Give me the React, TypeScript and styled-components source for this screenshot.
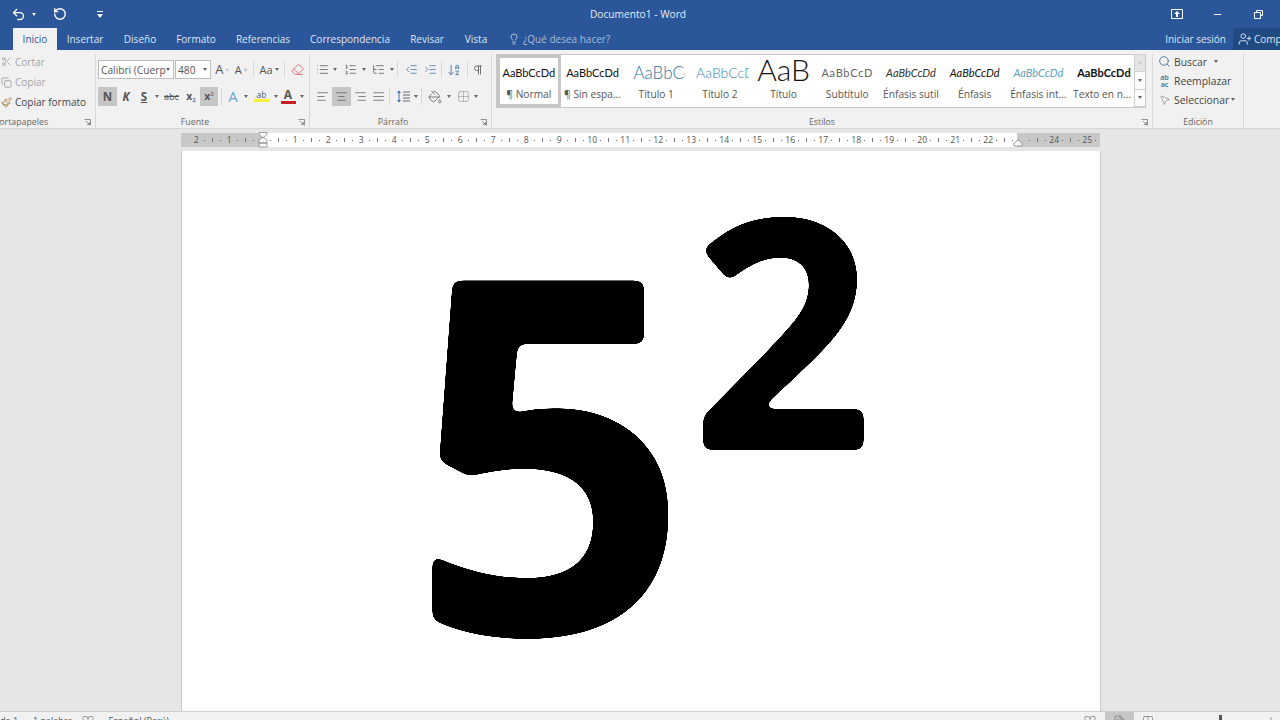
import React from "react";
import styled, { createGlobalStyle } from "styled-components";
import {
  Scissors, Copy, Paintbrush, Lightbulb, Search, MousePointer2, Pilcrow, List, ListOrdered, ListTree,
  AlignLeft, AlignCenter, AlignRight, AlignJustify, IndentDecrease, IndentIncrease, Grid2x2, PaintBucket,
  Undo2, RotateCcw, Minus, UserPlus, ArrowDownAZ, Eraser, BookOpen, Columns2, FileText, Plus,
} from "lucide-react";

const BLUE = "#2b579a";
const UI = `"Open Sans", "Liberation Sans", sans-serif`;

const Global = createGlobalStyle`
  html, body { margin: 0; padding: 0; background: #e6e6e6; overflow: hidden; }
  #root { width: 1280px; height: 720px; }
`;

const Window = styled.div`
  width: 1280px; height: 720px; display: flex; flex-direction: column; overflow: hidden;
  font-family: ${UI}; font-size: 10.5px; color: #444;
`;
const TitleBar = styled.div`
  height: 28px; flex: none; background: ${BLUE}; display: flex; align-items: center; color: #f2f5fa;
`;
const QuickAccess = styled.div`display: flex; align-items: center; width: 525px; padding-left: 11px; box-sizing: border-box;`;
const QuickIcon = styled.span<{ $w: number }>`display: flex; align-items: center; width: ${(p) => p.$w}px; color: #fff;`;
const CaretDown = styled.span<{ $c?: string }>`
  display: inline-block; flex: none; width: 0; height: 0;
  border-left: 2.5px solid transparent; border-right: 2.5px solid transparent;
  border-top: 3px solid ${(p) => p.$c || "#666"};
`;
const Title = styled.div`flex: none; width: 226px; text-align: center; font-size: 10.2px; color: #e6ebf4;`;
const WinControls = styled.div`margin-left: auto; display: flex; align-items: center; padding-right: 1px;`;
const WinBtn = styled.span<{ $w: number }>`display: flex; justify-content: center; width: ${(p) => p.$w}px; color: #fff;`;

const TabBar = styled.div`height: 22px; flex: none; background: ${BLUE}; display: flex; align-items: stretch; padding-left: 13px;`;
const Tab = styled.div<{ $active?: boolean; $w: number }>`
  width: ${(p) => p.$w}px; flex: none; display: flex; align-items: center; justify-content: center; font-size: 10px;
  color: ${(p) => (p.$active ? BLUE : "#dfe6f2")}; background: ${(p) => (p.$active ? "#f1f1f1" : "transparent")};
`;
const TellMe = styled.div`display: flex; align-items: center; gap: 3px; margin-left: 11px; color: #a8bcd9; font-size: 10px;`;
const Account = styled.div`margin-left: auto; display: flex; align-items: stretch;`;
const SignIn = styled.div`display: flex; align-items: center; color: #dfe6f2; font-size: 10px; margin-right: 7px;`;
const Share = styled.div`
  width: 47px; display: flex; align-items: center; gap: 2px; padding-left: 5px; box-sizing: border-box;
  background: #1f4a82; color: #dfe6f2; font-size: 10px; overflow: hidden; white-space: nowrap;
  svg { flex: none; }
`;

const Ribbon = styled.div`
  height: 79px; flex: none; background: #f1f1f1; border-bottom: 1px solid #d6d6d6; box-sizing: border-box; display: flex;
`;
const Group = styled.div<{ $w: number }>`
  width: ${(p) => p.$w}px; flex: none; box-sizing: border-box; position: relative; display: flex; flex-direction: column;
  margin-top: 4px; border-right: 1px solid #d8d8d8;
`;
const Body = styled.div`flex: 1; min-height: 0; display: flex; flex-direction: column;`;
const Footer = styled.div<{ $shift?: number }>`
  height: 14px; flex: none; text-align: center; font-size: 8.8px; line-height: 17px; color: #666; white-space: nowrap;
  padding-right: ${(p) => p.$shift || 0}px;
`;
const ClipFooter = styled(Footer)`text-align: left; margin-left: -6px;`;
const Launcher = styled.svg`position: absolute; right: 4px; bottom: 2px; width: 7px; height: 7px;`;

const ClipList = styled.div`display: flex; flex-direction: column; margin-top: -2px;`;
const ClipRow = styled.div<{ $on?: boolean; $h: number }>`
  height: ${(p) => p.$h}px; display: flex; align-items: center; gap: 3px; font-size: 10px; white-space: nowrap;
  color: ${(p) => (p.$on ? "#444" : "#a5a5a5")};
`;
const ClipIcon = styled.span`width: 12px; display: flex; justify-content: center; flex: none;`;

const Row = styled.div<{ $pad: number; $top: number }>`
  display: flex; align-items: center; height: 19px; padding-left: ${(p) => p.$pad}px; margin-top: ${(p) => p.$top}px;
`;
const Combo = styled.div<{ $w: number }>`
  width: ${(p) => p.$w}px; height: 19px; flex: none; box-sizing: border-box; background: #fff; border: 1px solid #bdbdbd;
  margin-right: 1px; display: flex; align-items: center; justify-content: space-between; padding: 0 3px 0 2px;
  font-size: 10.2px; color: #555; overflow: hidden; white-space: nowrap;
`;
const Btn = styled.div<{ $w: number; $on?: boolean; $c?: string }>`
  width: ${(p) => p.$w}px; height: 19px; flex: none; display: flex; align-items: center; justify-content: center; gap: 2px;
  background: ${(p) => (p.$on ? "#c6c6c6" : "transparent")}; color: ${(p) => p.$c || "#555"};
`;
const Sep = styled.div<{ $m?: number }>`width: 1px; height: 17px; flex: none; background: #d8d8d8; margin: 0 ${(p) => p.$m ?? 5}px;`;
const Letter = styled.span<{ $s?: number; $i?: boolean; $b?: boolean; $u?: boolean; $st?: boolean; $c?: string }>`
  font-size: ${(p) => p.$s || 11}px; line-height: 1; font-weight: ${(p) => (p.$b ? 700 : 400)};
  font-style: ${(p) => (p.$i ? "italic" : "normal")}; color: ${(p) => p.$c || "#555"};
  text-decoration: ${(p) => (p.$u ? "underline" : p.$st ? "line-through" : "none")};
`;
const Mini = styled.sup<{ $sub?: boolean; $c?: string }>`
  font-size: 6px; line-height: 0; vertical-align: ${(p) => (p.$sub ? "-2px" : "4px")}; color: ${(p) => p.$c || "#7a7a7a"};
`;
const Colored = styled.span<{ $bar: string }>`
  display: flex; flex-direction: column; align-items: center; line-height: 1; width: 15px; border-bottom: 3px solid ${(p) => p.$bar};
`;

const Gallery = styled.div`
  display: flex; height: 54px; margin-left: 4px; width: 650px; flex: none; box-sizing: border-box;
  background: #fff; border: 1px solid #c8c8c8;
`;
const StyleItem = styled.div<{ $sel?: boolean }>`
  width: 63.7px; flex: none; box-sizing: border-box; display: flex; flex-direction: column; align-items: center; overflow: hidden;
  border: 3px solid ${(p) => (p.$sel ? "#c6c6c6" : "transparent")};
`;
const Sample = styled.div<{ $c?: string; $s?: number; $i?: boolean; $b?: boolean; $light?: boolean; $start?: number; $track?: number; $up?: number }>`
  height: 29px; width: 100%; flex: none; display: flex; align-items: center; overflow: hidden; white-space: nowrap;
  justify-content: ${(p) => (p.$start !== undefined ? "flex-start" : "center")};
  padding-left: ${(p) => p.$start || 0}px; padding-bottom: ${(p) => p.$up || 0}px; box-sizing: border-box;
  color: ${(p) => p.$c || "#111"}; font-size: ${(p) => p.$s || 11}px; font-family: "Lato", sans-serif;
  font-style: ${(p) => (p.$i ? "italic" : "normal")}; font-weight: ${(p) => (p.$b ? 700 : p.$light ? 300 : 400)};
  letter-spacing: ${(p) => p.$track || 0}px;
`;
const StyleName = styled.div`font-size: 10.2px; color: #555; white-space: nowrap; line-height: 13px; margin-top: 1px;`;
const Scroller = styled.div`width: 12px; margin-left: auto; display: flex; flex-direction: column; background: #f1f1f1;`;
const ScrollBtn = styled.div<{ $dis?: boolean }>`
  flex: 1; display: flex; align-items: center; justify-content: center; border: 1px solid #d0d0d0; border-right: 0; margin-top: -1px;
  background: ${(p) => (p.$dis ? "#e4e4e4" : "#fbfbfb")};
`;

const EditList = styled.div`display: flex; flex-direction: column; padding-left: 4px; margin-top: -2px;`;
const EditRow = styled.div`height: 19px; display: flex; align-items: center; gap: 2px; font-size: 10.4px; color: #444; white-space: nowrap;`;
const EditIcon = styled.span`width: 15px; flex: none; display: flex; justify-content: center; color: #555;`;
const AbAc = styled.span`font-size: 7.2px; line-height: 7px; color: #3a6ea5; text-align: center; font-weight: 600;`;

const Canvas = styled.div`flex: 1; min-height: 0; background: #e6e6e6; display: flex; flex-direction: column; overflow: hidden;`;
const RulerZone = styled.div`height: 22px; flex: none; padding: 4px 0 0 181px; box-sizing: border-box;`;
const Ruler = styled.div`
  position: relative; width: 919px; height: 14px; display: flex; overflow: hidden; padding-left: 11px; box-sizing: border-box;
  background: linear-gradient(90deg, #c8c8c8 81px, #fff 81px, #fff 836px, #c8c8c8 836px);
`;
const Cm = styled.div`width: 33px; flex: none; display: grid; grid-template-columns: repeat(4, 8.25px); align-items: center; height: 14px;`;
const CmNum = styled.span`justify-self: center; font-size: 8.6px; color: #555; white-space: nowrap;`;
const Dot = styled.span`justify-self: center; width: 1px; height: 1px; background: #666;`;
const Tall = styled.span`justify-self: center; width: 1px; height: 4px; background: #777;`;
const Marker = styled.svg<{ $x: number; $top: number }>`
  position: absolute; left: ${(p) => p.$x}px; top: ${(p) => p.$top}px; width: 10px; height: 18px; overflow: visible;
`;
const MarkerWrap = styled.div`position: relative; width: 0; height: 0;`;
const Sheet = styled.div`
  flex: 1; min-height: 0; width: 920px; margin-left: 181px; box-sizing: border-box; background: #fff;
  border: 1px solid #c8c8c8; border-width: 0 1px; overflow: hidden;
`;
const Ink = styled.div`
  height: 100%; background: #fff; display: flex; align-items: flex-start; padding-left: 226px;
  filter: blur(5px) contrast(40); font-family: "Noto Sans", sans-serif; font-weight: 700; color: #000;
`;
const Digit = styled.span<{ $size: number; $top: number; $left: number }>`
  font-size: ${(p) => p.$size}px; line-height: 1; margin-top: ${(p) => p.$top}px; margin-left: ${(p) => p.$left}px;
`;

const Status = styled.div`
  height: 8px; flex: none; background: #f1f1f1; border-top: 1px solid #d0d0d0; display: flex; overflow: hidden; font-size: 9px; color: #555;
`;
const StatusText = styled.span<{ $ml: number }>`margin-left: ${(p) => p.$ml}px; margin-top: 2px; line-height: 13px; white-space: nowrap;`;
const StatusIcon = styled.span<{ $ml: number; $on?: boolean }>`
  margin-left: ${(p) => p.$ml}px; width: 29px; flex: none; display: flex; justify-content: center; padding-top: 3px; height: 20px;
  background: ${(p) => (p.$on ? "#c6c6c6" : "transparent")}; color: #666;
`;
const Thumb = styled.span<{ $ml: number }>`margin-left: ${(p) => p.$ml}px; margin-top: 3px; width: 3px; height: 10px; background: #555; flex: none;`;

const launcher = (
  <Launcher viewBox="0 0 7 7">
    <path d="M0.5 0.5h6v6M2 2l3.5 3.5M3 5.5h2.5V3" fill="none" stroke="#777" strokeWidth="0.8" />
  </Launcher>
);

const cms = [2, 1, 0, 1, 2, 3, 4, 5, 6, 7, 8, 9, 10, 11, 12, 13, 14, 15, 16, 17, 18, 19, 20, 21, 22, 23, 24, 25];

const styles = [
  { name: "¶ Normal", sel: true, text: "AaBbCcDd" },
  { name: "¶ Sin espa...", text: "AaBbCcDd" },
  { name: "Título 1", c: "#2f75a5", s: 17, text: "AaBbCcDd", light: true, start: 6 },
  { name: "Título 2", c: "#3b85b5", s: 14, text: "AaBbCcDd", light: true, start: 5 },
  { name: "Título", s: 30, text: "AaB", light: true, up: 8 },
  { name: "Subtítulo", c: "#666", text: "AaBbCcD", track: 0.7 },
  { name: "Énfasis sutil", c: "#333", i: true, text: "AaBbCcDd" },
  { name: "Énfasis", i: true, text: "AaBbCcDd" },
  { name: "Énfasis int...", c: "#5a9fc0", i: true, text: "AaBbCcDd" },
  { name: "Texto en n...", b: true, text: "AaBbCcDd", start: 4 },
];

export default function App() {
  return (
    <Window>
      <Global />
      <TitleBar>
        <QuickAccess>
          <QuickIcon $w={21}><Undo2 size={15} strokeWidth={2.2} /></QuickIcon>
          <QuickIcon $w={21}><CaretDown $c="#fff" /></QuickIcon>
          <QuickIcon $w={44}><RotateCcw size={14} strokeWidth={2.4} /></QuickIcon>
          <QuickIcon $w={10}><svg width="6" height="7" viewBox="0 0 6 7"><path d="M0 0h6v1H0zM0 3h6L3 7z" fill="#fff" /></svg></QuickIcon>
        </QuickAccess>
        <Title>Documento1 - Word</Title>
        <WinControls>
          <WinBtn $w={40}><svg width="12" height="10" viewBox="0 0 12 10"><path d="M.5.5h11v9H.5z" fill="none" stroke="#fff" /><path d="M6 2l3 3H7v3H5V5H3z" fill="#fff" /></svg></WinBtn>
          <WinBtn $w={40}><Minus size={11} strokeWidth={2} /></WinBtn>
          <WinBtn $w={42}><svg width="9" height="9" viewBox="0 0 9 9"><path d="M2.5 2V.5h6v5H7M.5 2.5h6v6h-6z" fill="none" stroke="#fff" /></svg></WinBtn>
        </WinControls>
      </TitleBar>
      <TabBar>
        <Tab $active $w={44}>Inicio</Tab>
        <Tab $w={56}>Insertar</Tab>
        <Tab $w={54}>Diseño</Tab>
        <Tab $w={58}>Formato</Tab>
        <Tab $w={76}>Referencias</Tab>
        <Tab $w={98}>Correspondencia</Tab>
        <Tab $w={56}>Revisar</Tab>
        <Tab $w={42}>Vista</Tab>
        <TellMe><Lightbulb size={12} strokeWidth={1.4} color="#dfe6f2" />¿Qué desea hacer?</TellMe>
        <Account>
          <SignIn>Iniciar sesión</SignIn>
          <Share><UserPlus size={14} strokeWidth={1.6} />Compartir</Share>
        </Account>
      </TabBar>
      <Ribbon>
        <Group $w={96}>
          <Body>
            <ClipList>
              <ClipRow $h={19}><ClipIcon><Scissors size={11} color="#a5a5a5" /></ClipIcon>Cortar</ClipRow>
              <ClipRow $h={22}><ClipIcon><Copy size={11} color="#a5a5a5" /></ClipIcon>Copiar</ClipRow>
              <ClipRow $h={18} $on><ClipIcon><Paintbrush size={11} color="#a9803f" /></ClipIcon>Copiar formato</ClipRow>
            </ClipList>
          </Body>
          <ClipFooter>Portapapeles</ClipFooter>
          {launcher}
        </Group>
        <Group $w={214}>
          <Body>
            <Row $pad={2} $top={6}>
              <Combo $w={76}>Calibri (Cuerp<CaretDown /></Combo>
              <Combo $w={36}>480<CaretDown /></Combo>
              <Btn $w={20}><Letter $s={13}>A</Letter><Mini>^</Mini></Btn>
              <Btn $w={18}><Letter $s={11}>A</Letter><Mini>˅</Mini></Btn>
              <Sep $m={3} />
              <Btn $w={24}><Letter $s={11}>Aa</Letter><CaretDown /></Btn>
              <Sep $m={3} />
              <Btn $w={18}><Eraser size={13} color="#d9626b" strokeWidth={1.6} /></Btn>
            </Row>
            <Row $pad={2} $top={8}>
              <Btn $w={19} $on><Letter $b $s={11.5}>N</Letter></Btn>
              <Btn $w={18}><Letter $b $i $s={11.5}>K</Letter></Btn>
              <Btn $w={18}><Letter $b $u $s={11.5}>S</Letter></Btn>
              <Btn $w={8}><CaretDown /></Btn>
              <Btn $w={21}><Letter $st $s={9}>abc</Letter></Btn>
              <Btn $w={18}><Letter $b $s={10.5}>x<Mini $sub $c="#4a7ebb">2</Mini></Letter></Btn>
              <Btn $w={18} $on><Letter $b $s={10.5}>x<Mini>2</Mini></Letter></Btn>
              <Sep $m={3} />
              <Btn $w={16}><Letter $s={15} $c="#6ea3d8">A</Letter></Btn>
              <Btn $w={9}><CaretDown /></Btn>
              <Btn $w={23}><Colored $bar="#f7ee3a"><Letter $s={8.5}>ab</Letter></Colored></Btn>
              <Btn $w={5}><CaretDown /></Btn>
              <Btn $w={20}><Colored $bar="#c8201f"><Letter $s={12} $b>A</Letter></Colored></Btn>
              <Btn $w={8}><CaretDown /></Btn>
            </Row>
          </Body>
          <Footer $shift={15}>Fuente</Footer>
          {launcher}
        </Group>
        <Group $w={182}>
          <Body>
            <Row $pad={4} $top={6}>
              <Btn $w={16}><List size={13} strokeWidth={1.4} /></Btn>
              <Btn $w={9}><CaretDown /></Btn>
              <Btn $w={22}><ListOrdered size={13} strokeWidth={1.4} /></Btn>
              <Btn $w={5}><CaretDown /></Btn>
              <Btn $w={24}><ListTree size={13} strokeWidth={1.4} /></Btn>
              <Btn $w={4}><CaretDown /></Btn>
              <Sep $m={3} />
              <Btn $w={20} $c="#4172b0"><IndentDecrease size={13} strokeWidth={1.4} /></Btn>
              <Btn $w={18} $c="#4172b0"><IndentIncrease size={13} strokeWidth={1.4} /></Btn>
              <Sep $m={2} />
              <Btn $w={20}><ArrowDownAZ size={14} strokeWidth={1.4} color="#3a6ea5" /></Btn>
              <Sep $m={3} />
              <Btn $w={14}><Pilcrow size={12} strokeWidth={1.6} /></Btn>
            </Row>
            <Row $pad={3} $top={8}>
              <Btn $w={19}><AlignLeft size={13} strokeWidth={1.3} /></Btn>
              <Btn $w={19} $on><AlignCenter size={13} strokeWidth={1.3} /></Btn>
              <Btn $w={18}><AlignRight size={13} strokeWidth={1.3} /></Btn>
              <Btn $w={18}><AlignJustify size={13} strokeWidth={1.3} /></Btn>
              <Sep $m={2} />
              <Btn $w={22}>
                <svg width="14" height="13" viewBox="0 0 14 13" fill="none">
                  <path d="M3 1v11" stroke="#4172b0" strokeWidth="1" />
                  <path d="M1 3l2-2.5L5 3zM1 10l2 2.5L5 10z" fill="#4172b0" />
                  <path d="M7 2h7M7 5h7M7 8h7M7 11h7" stroke="#666" strokeWidth="1" />
                </svg>
              </Btn>
              <Btn $w={4}><CaretDown /></Btn>
              <Sep $m={3} />
              <Btn $w={20}><PaintBucket size={14} strokeWidth={1.3} /></Btn>
              <Btn $w={8}><CaretDown /></Btn>
              <Btn $w={20}><Grid2x2 size={13} strokeWidth={1} color="#888" /></Btn>
              <Btn $w={6}><CaretDown /></Btn>
            </Row>
          </Body>
          <Footer $shift={15}>Párrafo</Footer>
          {launcher}
        </Group>
        <Group $w={661}>
          <Body>
            <Gallery>
              {styles.map((st) => (
                <StyleItem key={st.name} $sel={st.sel}>
                  <Sample $c={st.c} $s={st.s} $i={st.i} $b={st.b} $light={st.light} $start={st.start} $track={st.track} $up={st.up}>{st.text}</Sample>
                  <StyleName>{st.name}</StyleName>
                </StyleItem>
              ))}
              <Scroller>
                <ScrollBtn $dis><CaretDown $c="#c4c4c4" /></ScrollBtn>
                <ScrollBtn><CaretDown /></ScrollBtn>
                <ScrollBtn><CaretDown /></ScrollBtn>
              </Scroller>
            </Gallery>
          </Body>
          <Footer>Estilos</Footer>
          {launcher}
        </Group>
        <Group $w={91}>
          <Body>
            <EditList>
              <EditRow><EditIcon><Search size={13} color="#3a6ea5" strokeWidth={1.6} /></EditIcon>Buscar&nbsp;&nbsp;<CaretDown /></EditRow>
              <EditRow><EditIcon><AbAc>ab<br />ac</AbAc></EditIcon>Reemplazar</EditRow>
              <EditRow><EditIcon><MousePointer2 size={12} strokeWidth={1.2} color="#777" /></EditIcon>Seleccionar<CaretDown /></EditRow>
            </EditList>
          </Body>
          <Footer>Edición</Footer>
        </Group>
      </Ribbon>
      <Canvas>
        <RulerZone>
          <Ruler>
            {cms.map((n, i) => (
              <Cm key={i}>
                <CmNum>{n === 0 || n === 23 ? "" : n}</CmNum>
                <Dot /><Tall /><Dot />
              </Cm>
            ))}
          </Ruler>
          <MarkerWrap>
            <Marker $x={77} $top={-15} viewBox="0 0 10 18">
              <path d="M1 .5h8v2L5 6 1 2.5z M1 11V8l4-3 4 3v3zM1 11h8v4H1z" fill="#f6f6f6" stroke="#8a8a8a" strokeWidth="0.8" />
            </Marker>
            <Marker $x={832} $top={-8} viewBox="0 0 10 18">
              <path d="M1 7V4l4-3 4 3v3z" fill="#f6f6f6" stroke="#8a8a8a" strokeWidth="0.8" />
            </Marker>
          </MarkerWrap>
        </RulerZone>
        <Sheet>
          <Ink>
            <Digit $size={495} $top={44} $left={0}>5</Digit>
            <Digit $size={322} $top={13} $left={-1}>2</Digit>
          </Ink>
        </Sheet>
      </Canvas>
      <Status>
        <StatusText $ml={0}>de 1</StatusText>
        <StatusText $ml={15}>1 palabra</StatusText>
        <StatusIcon $ml={1}><BookOpen size={12} strokeWidth={1.2} /></StatusIcon>
        <StatusText $ml={6}>Español (Perú)</StatusText>
        <StatusIcon $ml={907}><BookOpen size={12} strokeWidth={1.2} /></StatusIcon>
        <StatusIcon $ml={0} $on><FileText size={12} strokeWidth={1.2} /></StatusIcon>
        <StatusIcon $ml={0}><Columns2 size={12} strokeWidth={1.2} /></StatusIcon>
        <Thumb $ml={56} />
        <StatusIcon $ml={35}><Plus size={12} strokeWidth={1.2} /></StatusIcon>
      </Status>
    </Window>
  );
}
